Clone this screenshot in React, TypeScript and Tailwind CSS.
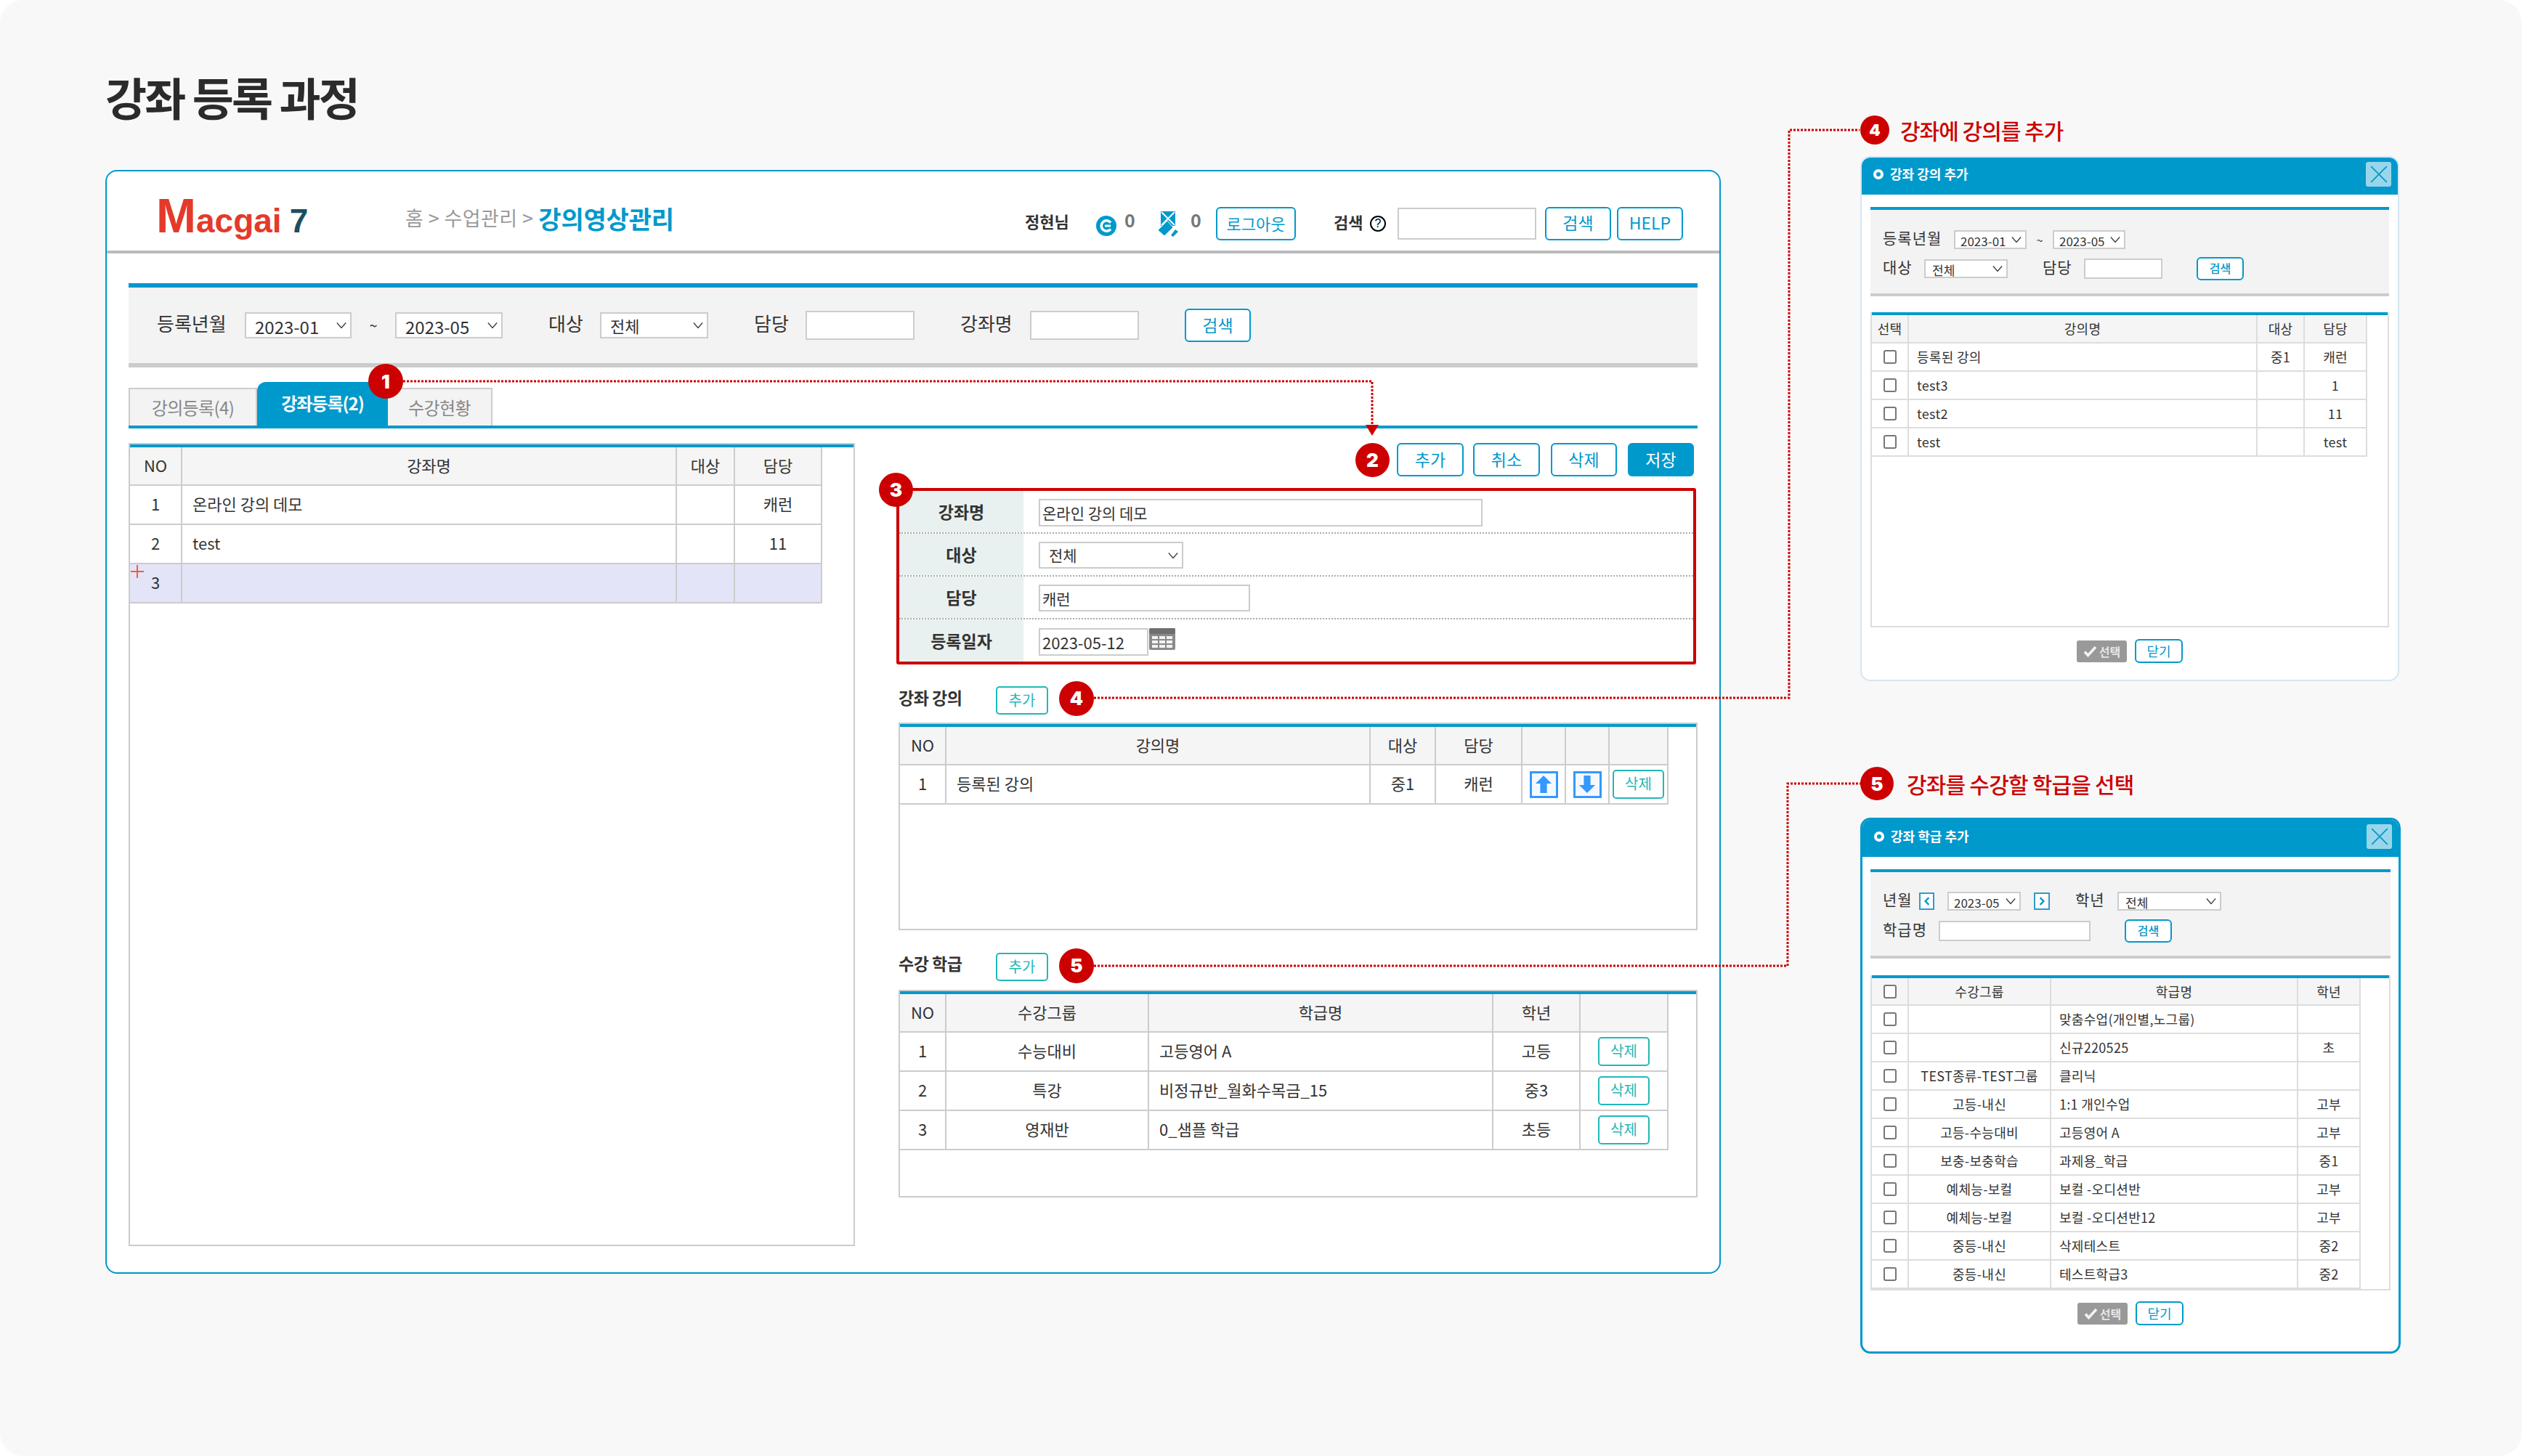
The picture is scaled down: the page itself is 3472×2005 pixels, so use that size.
const inputCls = "border-2 border-[#ccc] bg-white px-[3px] text-[#333] outline-none";
const thCls = "border-r-2 border-b-2 border-[#ccc] bg-[#f5f5f5] pb-[3px] font-normal";
const tdCls = "border-r-2 border-b-2 border-[#ccc] pb-[3px] text-center font-normal";
const tdBtnCls = "border-r-2 border-b-2 border-[#ccc] text-center font-normal";
const tdLeftCls = "border-r-2 border-b-2 border-[#ccc] pb-[3px] pl-[14px] text-left font-normal";
const mThCls = "border-r-2 border-b-2 border-[#ddd] bg-[#f5f5f5] font-normal";
const mTdCls = "border-r-2 border-b-2 border-[#ddd] text-center font-normal";
const mTdLeftCls = "border-r-2 border-b-2 border-[#ddd] pl-[11px] text-left font-normal";

function Select({ value, className, pad = "pl-[12px]" }: any) {
  return (
    <div className={`relative shrink-0 ${className}`}>
      <select
        defaultValue={value}
        className={`h-full w-full appearance-none border-2 border-[#ccc] bg-white text-[#333] outline-none ${pad}`}
      >
        <option>{value}</option>
      </select>
      <svg viewBox="0 0 16 10" className="pointer-events-none absolute top-1/2 right-[7px] h-[9px] w-[14px] -translate-y-1/2" fill="none" stroke="#333" strokeWidth="1.4">
        <path d="M1 1l7 8 7-8" />
      </svg>
    </div>
  );
}

function BlueBtn({ children, className }: any) {
  return (
    <button className={`shrink-0 rounded-[6px] border-2 border-[#0099cc] bg-white pb-[2px] text-[#0099cc] ${className}`}>
      {children}
    </button>
  );
}

function TealBtn({ children, className }: any) {
  return (
    <button className={`shrink-0 rounded-[5px] border-2 border-[#22b8b8] bg-white pb-[2px] text-[20px] leading-none text-[#22b8b8] ${className}`}>
      {children}
    </button>
  );
}

function Badge({ n, className }: any) {
  return (
    <div className={`z-10 flex shrink-0 items-center justify-center rounded-full bg-[#cc0000] font-['Inter',sans-serif] font-black text-white ${className}`}>
      {n}
    </div>
  );
}

function TableBox({ className, children }: any) {
  return (
    <div className={`overflow-hidden border-2 border-[#ccc] bg-white ${className}`}>
      <div className="h-[4px] bg-[#0099cc]" />
      {children}
    </div>
  );
}

function ArrowBtn({ dir }: any) {
  return (
    <div className="mx-auto flex h-[37px] w-[39px] items-center justify-center border-[3px] border-[#3399ff] bg-[#f4f9ff]">
      <svg viewBox="0 0 26 28" className="h-[26px] w-[24px]" fill="#3399ff">
        {dir === "up" ? <path d="M13 1l12 12h-7v14H8V13H1z" /> : <path d="M13 27L1 15h7V1h10v14h7z" />}
      </svg>
    </div>
  );
}

function ModalHead({ title }: any) {
  return (
    <div className="flex h-[51px] shrink-0 items-center bg-[#0099cc] pr-[9px] pb-[6px] pl-[16px]">
      <div className="h-[14px] w-[14px] rounded-full border-[4px] border-white" />
      <div className="ml-[9px] text-[18px] font-bold text-white">{title}</div>
      <div className="ml-auto flex h-[34px] w-[35px] items-center justify-center rounded-[3px] bg-[#99d6ea]">
        <svg viewBox="0 0 24 24" className="h-[26px] w-[26px]" stroke="#0099cc" strokeWidth="1.6" fill="none">
          <path d="M2 2l20 20M22 2L2 22" />
        </svg>
      </div>
    </div>
  );
}

function ModalFoot({ className }: any) {
  return (
    <div className={`flex items-center justify-center gap-[11px] ${className}`}>
      <button className="flex h-[30px] w-[69px] items-center justify-center gap-[3px] rounded-[3px] bg-[#999] text-[16px] font-bold text-[#e6e6e6]">
        <svg viewBox="0 0 18 16" className="h-[16px] w-[19px]" fill="none" stroke="#f2f2f2" strokeWidth="3.6">
          <path d="M1.5 8.5l4.5 5L16.5 2" />
        </svg>
        선택
      </button>
      <BlueBtn className="h-[33px] w-[66px] text-[18px] leading-none">닫기</BlueBtn>
    </div>
  );
}

function Check() {
  return <div className="mx-auto h-[19px] w-[18px] rounded-[3px] border-2 border-[#777] bg-white" />;
}

const lessonRows = [
  ["등록된 강의", "중1", "캐런"],
  ["test3", "", "1"],
  ["test2", "", "11"],
  ["test", "", "test"],
];

const classRows = [
  ["", "맞춤수업(개인별,노그룹)", ""],
  ["", "신규220525", "초"],
  ["TEST종류-TEST그룹", "클리닉", ""],
  ["고등-내신", "1:1 개인수업", "고부"],
  ["고등-수능대비", "고등영어 A", "고부"],
  ["보충-보충학습", "과제용_학급", "중1"],
  ["예체능-보컬", "보컬 -오디션반", "고부"],
  ["예체능-보컬", "보컬 -오디션반12", "고부"],
  ["중등-내신", "삭제테스트", "중2"],
  ["중등-내신", "테스트학급3", "중2"],
  ["", "", ""],
];

const gradeRows = [
  ["1", "수능대비", "고등영어 A", "고등"],
  ["2", "특강", "비정규반_월화수목금_15", "중3"],
  ["3", "영재반", "0_샘플 학급", "초등"],
];

export default function App() {
  return (
    <div className="relative flex h-[2005px] w-[3472px] overflow-hidden rounded-[32px] bg-[#f8f8f8] pl-[145px] font-['Noto_Sans_CJK_KR','Noto_Sans',sans-serif] text-[#333]">
      {/* dotted connectors between the numbered badges */}
      <svg className="pointer-events-none absolute top-0 left-0 z-10 h-[2005px] w-[3472px]" fill="none" stroke="#cc0000" strokeWidth="3" strokeDasharray="3 2">
        <path d="M555 525H1889V586" />
        <path d="M1506 961H2463V179H2560" />
        <path d="M1506 1330H2461V1079H2561" />
        <path d="M1880 585h18l-9 15z" fill="#cc0000" stroke="none" />
      </svg>

      <div className="w-[2224px] shrink-0">
        <h1 className="mt-[98px] mb-[66px] h-[70px] text-[62px] leading-[70px] font-bold tracking-[-2.8px] text-[#2b2b2b]">
          강좌 등록 과정
        </h1>

        <div className="h-[1520px] overflow-hidden rounded-[16px] border-2 border-[#0099cc] bg-white">
          {/* top bar */}
          <div className="flex h-[113px] items-center border-b-4 border-[#bbb] pt-[34px] pr-[50px] pl-[68px]">
            <div className="flex w-[343px] shrink-0 -translate-y-[11px] items-baseline font-['Liberation_Sans',sans-serif] leading-none font-bold">
              <span className="text-[66px] text-[#e43a2a]">M</span>
              <span className="text-[46px] text-[#e43a2a]">acgai</span>
              <span className="ml-[11px] text-[46px] text-[#1c4f63]">7</span>
            </div>
            <div className="-translate-y-[7px] text-[27px] tracking-[0.4px] text-[#999]">홈 &gt; 수업관리 &gt;</div>
            <div className="ml-[7px] -translate-y-[7px] text-[34px] font-bold tracking-[-0.2px] text-[#0099cc]">강의영상관리</div>

            <div className="ml-auto flex items-center">
              <div className="w-[98px] -translate-y-[3px] text-[22px] font-bold">정현님</div>
              <svg viewBox="0 0 28 28" className="h-[28px] w-[28px] shrink-0 translate-y-[3px]">
                <circle cx="14" cy="14" r="14" fill="#0099cc" />
                <path d="M20 9.5a7.2 7.2 0 1 0 0 9" fill="none" stroke="#fff" strokeWidth="3.6" />
                <path d="M12 14h8" stroke="#fff" strokeWidth="3" />
              </svg>
              <div className="ml-[11px] w-[46px] -translate-y-[5px] text-[25px] font-bold text-[#777]">0</div>
              <svg viewBox="0 0 30 36" className="h-[36px] w-[30px] shrink-0 translate-y-[1px]">
                <rect x="4" y="0" width="20" height="20" fill="#0099cc" />
                <path d="M5 1l18 18M23 1L5 19" stroke="#fff" strokeWidth="1.8" />
                <path d="M0 26L13 13l8 9L9 34z" fill="#0099cc" stroke="#fff" strokeWidth="1" />
                <path d="M18 33l6-8 4 3-7 7z" fill="#0099cc" />
              </svg>
              <div className="w-[50px] -translate-y-[5px] pl-[15px] text-[25px] font-bold text-[#777]">0</div>
              <BlueBtn className="h-[46px] w-[110px] text-[22px] leading-none">로그아웃</BlueBtn>
              <div className="ml-[52px] w-[44px] -translate-y-[2px] text-[22px] font-bold">검색</div>
              <div className="ml-[6px] flex h-[22px] w-[22px] items-center justify-center rounded-full border-2 border-black font-['Liberation_Sans',sans-serif] text-[16px] leading-none text-black">
                ?
              </div>
              <input className={`ml-[16px] h-[44px] w-[191px] ${inputCls}`} />
              <BlueBtn className="ml-[12px] h-[46px] w-[91px] text-[23px] leading-none">검색</BlueBtn>
              <BlueBtn className="ml-[8px] h-[46px] w-[91px] text-[23px] leading-none">HELP</BlueBtn>
            </div>
          </div>

          <div className="px-[30px]">
            {/* search */}
            <div className="mt-[41px] flex h-[116px] items-center border-t-[6px] border-b-[6px] border-t-[#0099cc] border-b-[#ccc] bg-[#f3f3f3] pl-[39px] text-[26px]">
              <div className="w-[121px] shrink-0 -translate-y-[4px]">등록년월</div>
              <Select value="2023-01" className="h-[36px] w-[147px] text-[24px]" />
              <div className="w-[60px] shrink-0 text-center text-[20px]">~</div>
              <Select value="2023-05" className="h-[36px] w-[148px] text-[24px]" />
              <div className="ml-[63px] w-[71px] shrink-0 -translate-y-[4px]">대상</div>
              <Select value="전체" className="h-[36px] w-[149px] text-[22px]" />
              <div className="ml-[63px] w-[71px] shrink-0 -translate-y-[4px]">담당</div>
              <input className={`h-[40px] w-[150px] ${inputCls}`} />
              <div className="ml-[63px] w-[96px] shrink-0 -translate-y-[4px]">강좌명</div>
              <input className={`h-[40px] w-[150px] ${inputCls}`} />
              <BlueBtn className="ml-[63px] h-[46px] w-[91px] text-[23px] leading-none">검색</BlueBtn>
            </div>

            {/* tabs */}
            <div className="relative mt-[20px] flex h-[64px] items-end border-b-4 border-[#0099cc] text-[24px]">
              <div className="flex h-[52px] w-[177px] items-center justify-center border-2 border-b-0 border-[#ccc] bg-[#f3f3f3] tracking-[-0.6px] text-[#888]">
                강의등록(4)
              </div>
              <div className="flex h-[60px] w-[180px] items-center justify-center rounded-t-[12px] bg-[#0099cc] pb-[2px] font-bold tracking-[-1px] text-white">
                강좌등록(2)
              </div>
              <div className="flex h-[52px] w-[144px] items-center justify-center border-2 border-b-0 border-l-0 border-[#ccc] bg-[#f3f3f3] tracking-[-0.6px] text-[#888]">
                수강현황
              </div>
              <Badge n="1" className="absolute top-[-25px] left-[330px] h-[48px] w-[48px] text-[26px]" />
            </div>

            <div className="mt-[20px] flex">
              {/* left list */}
              <TableBox className="relative h-[1106px] w-[1000px] shrink-0">
                <table className="w-[952px] table-fixed border-collapse text-[22px]">
                  <colgroup>
                    <col className="w-[71px]" />
                    <col className="w-[681px]" />
                    <col className="w-[80px]" />
                    <col className="w-[120px]" />
                  </colgroup>
                  <thead>
                    <tr className="h-[52px]">
                      <th className={thCls}>NO</th>
                      <th className={thCls}>강좌명</th>
                      <th className={thCls}>대상</th>
                      <th className={thCls}>담당</th>
                    </tr>
                  </thead>
                  <tbody>
                    <tr className="h-[54px]">
                      <td className={tdCls}>1</td>
                      <td className={tdLeftCls}>온라인 강의 데모</td>
                      <td className={tdCls}></td>
                      <td className={tdCls}>캐런</td>
                    </tr>
                    <tr className="h-[54px]">
                      <td className={tdCls}>2</td>
                      <td className={tdLeftCls}>test</td>
                      <td className={tdCls}></td>
                      <td className={tdCls}>11</td>
                    </tr>
                    <tr className="h-[54px] bg-[#e3e4f7]">
                      <td className={tdCls}>3</td>
                      <td className={tdLeftCls}></td>
                      <td className={tdCls}></td>
                      <td className={tdCls}></td>
                    </tr>
                  </tbody>
                </table>
                <svg viewBox="0 0 18 18" className="absolute top-[166px] left-[1px] h-[18px] w-[18px]" stroke="#ff5a36" strokeWidth="2">
                  <path d="M0 9h18M9 0v18" />
                </svg>
              </TableBox>

              {/* right edit panel */}
              <div className="ml-[60px] w-[1100px] shrink-0">
                <div className="flex h-[46px] items-center justify-end pr-[5px] text-[23px]">
                  <Badge n="2" className="mr-[10px] h-[47px] w-[47px] text-[26px]" />
                  <BlueBtn className="h-[46px] w-[92px] leading-none">추가</BlueBtn>
                  <BlueBtn className="ml-[13px] h-[46px] w-[92px] leading-none">취소</BlueBtn>
                  <BlueBtn className="ml-[15px] h-[46px] w-[91px] leading-none">삭제</BlueBtn>
                  <button className="ml-[15px] h-[46px] w-[91px] rounded-[6px] bg-[#0099cc] pb-[2px] leading-none text-white">저장</button>
                </div>

                <div className="relative mt-[16px] -ml-[3px] h-[243px] w-[1101px] rounded-[3px] border-4 border-[#cc0000] text-[23px]">
                  <Badge n="3" className="absolute top-[-25px] left-[-28px] h-[47px] w-[47px] text-[26px]" />
                  <div className="flex h-[59px] border-b-2 border-dotted border-[#aaa]">
                    <div className="flex w-[171px] items-center justify-center bg-[#e9f1f0] font-bold">강좌명</div>
                    <input defaultValue="온라인 강의 데모" className={`mt-[11px] ml-[21px] h-[38px] w-[611px] text-[21px] ${inputCls}`} />
                  </div>
                  <div className="flex h-[59px] border-b-2 border-dotted border-[#aaa]">
                    <div className="flex w-[171px] items-center justify-center bg-[#e9f1f0] font-bold">대상</div>
                    <Select value="전체" className="mt-[11px] ml-[21px] h-[37px] w-[199px] text-[21px]" />
                  </div>
                  <div className="flex h-[59px] border-b-2 border-dotted border-[#aaa]">
                    <div className="flex w-[171px] items-center justify-center bg-[#e9f1f0] font-bold">담당</div>
                    <input defaultValue="캐런" className={`mt-[11px] ml-[21px] h-[37px] w-[291px] text-[21px] ${inputCls}`} />
                  </div>
                  <div className="flex h-[58px]">
                    <div className="flex w-[171px] items-center justify-center bg-[#e9f1f0] font-bold">등록일자</div>
                    <input defaultValue="2023-05-12" className={`mt-[12px] ml-[21px] h-[38px] w-[151px] text-[22px] ${inputCls}`} />
                    <svg viewBox="0 0 36 30" className="mt-[12px] ml-[1px] h-[30px] w-[36px]">
                      <rect width="36" height="30" rx="2" fill="#8a8a8a" />
                      <rect width="36" height="8" rx="2" fill="#6f6f6f" />
                      <path d="M4 11h8v4H4zM14 11h8v4h-8zM24 11h8v4h-8zM4 17h8v4H4zM14 17h8v4h-8zM24 17h8v4h-8zM4 23h8v4H4zM14 23h8v4h-8zM24 23h8v4h-8z" fill="#f2f2f2" />
                    </svg>
                  </div>
                </div>

                {/* lessons in course */}
                <div className="mt-[30px] flex h-[39px] items-center">
                  <div className="w-[134px] shrink-0 -translate-y-[4px] text-[23px] font-bold tracking-[-0.5px]">강좌 강의</div>
                  <TealBtn className="h-[39px] w-[72px]">추가</TealBtn>
                  <Badge n="4" className="ml-[15px] h-[48px] w-[48px] -translate-y-[3px] text-[26px]" />
                </div>
                <TableBox className="mt-[11px] h-[286px] w-[1100px]">
                  <table className="w-[1057px] table-fixed border-collapse text-[22px]">
                    <colgroup>
                      <col className="w-[63px]" />
                      <col className="w-[584px]" />
                      <col className="w-[90px]" />
                      <col className="w-[119px]" />
                      <col className="w-[60px]" />
                      <col className="w-[60px]" />
                      <col className="w-[81px]" />
                    </colgroup>
                    <thead>
                      <tr className="h-[52px]">
                        <th className={thCls}>NO</th>
                        <th className={thCls}>강의명</th>
                        <th className={thCls}>대상</th>
                        <th className={thCls}>담당</th>
                        <th className={thCls}></th>
                        <th className={thCls}></th>
                        <th className={thCls}></th>
                      </tr>
                    </thead>
                    <tbody>
                      <tr className="h-[54px]">
                        <td className={tdCls}>1</td>
                        <td className={tdLeftCls}>등록된 강의</td>
                        <td className={tdCls}>중1</td>
                        <td className={tdCls}>캐런</td>
                        <td className={tdBtnCls}><ArrowBtn dir="up" /></td>
                        <td className={tdBtnCls}><ArrowBtn dir="down" /></td>
                        <td className={tdBtnCls}><TealBtn className="h-[40px] w-[71px]">삭제</TealBtn></td>
                      </tr>
                    </tbody>
                  </table>
                </TableBox>

                {/* classes in course */}
                <div className="mt-[31px] flex h-[39px] items-center">
                  <div className="w-[134px] shrink-0 -translate-y-[5px] text-[23px] font-bold tracking-[-0.5px]">수강 학급</div>
                  <TealBtn className="h-[39px] w-[72px]">추가</TealBtn>
                  <Badge n="5" className="ml-[15px] h-[48px] w-[48px] -translate-y-[2px] text-[26px]" />
                </div>
                <TableBox className="mt-[12px] h-[286px] w-[1100px]">
                  <table className="w-[1057px] table-fixed border-collapse text-[22px]">
                    <colgroup>
                      <col className="w-[63px]" />
                      <col className="w-[279px]" />
                      <col className="w-[474px]" />
                      <col className="w-[120px]" />
                      <col className="w-[121px]" />
                    </colgroup>
                    <thead>
                      <tr className="h-[52px]">
                        <th className={thCls}>NO</th>
                        <th className={thCls}>수강그룹</th>
                        <th className={thCls}>학급명</th>
                        <th className={thCls}>학년</th>
                        <th className={thCls}></th>
                      </tr>
                    </thead>
                    <tbody>
                      {gradeRows.map((r) => (
                        <tr key={r[0]} className="h-[54px]">
                          <td className={tdCls}>{r[0]}</td>
                          <td className={tdCls}>{r[1]}</td>
                          <td className={tdLeftCls}>{r[2]}</td>
                          <td className={tdCls}>{r[3]}</td>
                          <td className={tdBtnCls}><TealBtn className="h-[40px] w-[71px]">삭제</TealBtn></td>
                        </tr>
                      ))}
                    </tbody>
                  </table>
                </TableBox>
              </div>
            </div>
          </div>
        </div>
      </div>

      {/* popups on the right */}
      <div className="ml-[192px] w-[744px] shrink-0 pt-[159px]">
        <div className="flex h-[40px] items-center">
          <Badge n="4" className="h-[40px] w-[40px] text-[22px]" />
          <div className="ml-[15px] text-[30px] font-medium tracking-[-1px] text-[#cc0000]">강좌에 강의를 추가</div>
        </div>

        <div className="mt-[16px] flex h-[723px] w-[742px] flex-col overflow-hidden rounded-[14px] border-2 border-[#d6e6f2] bg-white">
          <ModalHead title="강좌 강의 추가" />
          <div className="px-[12px] pt-[17px]">
            <div className="h-[123px] border-t-4 border-b-4 border-t-[#0099cc] border-b-[#ccc] bg-[#f3f3f3] pt-[26px] pl-[17px] text-[21px]">
              <div className="flex h-[30px] items-center">
                <div className="w-[98px] shrink-0 -translate-y-[2px] tracking-[1px]">등록년월</div>
                <Select value="2023-01" pad="pl-[7px]" className="h-[26px] w-[100px] text-[17px]" />
                <div className="w-[36px] shrink-0 text-center text-[16px]">~</div>
                <Select value="2023-05" pad="pl-[7px]" className="h-[26px] w-[100px] text-[17px]" />
              </div>
              <div className="mt-[10px] flex h-[30px] items-center">
                <div className="w-[57px] shrink-0 -translate-y-[2px] tracking-[1px]">대상</div>
                <Select value="전체" pad="pl-[9px]" className="h-[26px] w-[115px] text-[17px]" />
                <div className="ml-[48px] w-[57px] shrink-0 -translate-y-[2px] tracking-[1px]">담당</div>
                <input className={`h-[28px] w-[108px] ${inputCls}`} />
                <BlueBtn className="ml-[47px] h-[32px] w-[65px] text-[16px] leading-none font-medium">검색</BlueBtn>
              </div>
            </div>

            <div className="mt-[22px] h-[434px] overflow-hidden border-2 border-t-0 border-[#ddd]">
              <div className="h-[4px] bg-[#0099cc]" />
              <table className="w-[681px] table-fixed border-collapse text-[18px] tracking-[0.3px]">
                <colgroup>
                  <col className="w-[50px]" />
                  <col className="w-[480px]" />
                  <col className="w-[65px]" />
                  <col className="w-[86px]" />
                </colgroup>
                <thead>
                  <tr className="h-[38px]">
                    <th className={mThCls}>선택</th>
                    <th className={mThCls}>강의명</th>
                    <th className={mThCls}>대상</th>
                    <th className={mThCls}>담당</th>
                  </tr>
                </thead>
                <tbody>
                  {lessonRows.map((r) => (
                    <tr key={r[0]} className="h-[39px]">
                      <td className={mTdCls}><Check /></td>
                      <td className={mTdLeftCls}>{r[0]}</td>
                      <td className={mTdCls}>{r[1]}</td>
                      <td className={mTdCls}>{r[2]}</td>
                    </tr>
                  ))}
                </tbody>
              </table>
            </div>
            <ModalFoot className="mt-[16px]" />
          </div>
        </div>

        <div className="mt-[118px] flex h-[46px] items-center">
          <Badge n="5" className="h-[46px] w-[46px] text-[26px]" />
          <div className="ml-[18px] text-[30px] font-medium tracking-[-0.8px] text-[#cc0000]">강좌를 수강할 학급을 선택</div>
        </div>

        <div className="mt-[24px] flex h-[738px] w-[744px] flex-col overflow-hidden rounded-[14px] border-[3px] border-[#0099cc] bg-white">
          <ModalHead title="강좌 학급 추가" />
          <div className="px-[11px] pt-[17px]">
            <div className="h-[123px] border-t-4 border-b-4 border-t-[#0099cc] border-b-[#ccc] bg-[#f3f3f3] pt-[25px] pl-[17px] text-[21px]">
              <div className="flex h-[30px] items-center">
                <div className="w-[50px] shrink-0 -translate-y-[2px] tracking-[1px]">년월</div>
                <div className="flex h-[24px] w-[21px] shrink-0 items-center justify-center border-2 border-[#3399cc] bg-white">
                  <svg viewBox="0 0 10 14" className="h-[12px] w-[8px]" fill="none" stroke="#0099cc" strokeWidth="3"><path d="M8 1L2 7l6 6" /></svg>
                </div>
                <Select value="2023-05" pad="pl-[7px]" className="ml-[18px] h-[26px] w-[101px] text-[17px]" />
                <div className="ml-[18px] flex h-[24px] w-[22px] shrink-0 items-center justify-center border-2 border-[#3399cc] bg-white">
                  <svg viewBox="0 0 10 14" className="h-[12px] w-[8px]" fill="none" stroke="#0099cc" strokeWidth="3"><path d="M2 1l6 6-6 6" /></svg>
                </div>
                <div className="ml-[35px] w-[58px] shrink-0 -translate-y-[2px] tracking-[1px]">학년</div>
                <Select value="전체" pad="pl-[9px]" className="h-[26px] w-[143px] text-[17px]" />
              </div>
              <div className="mt-[11px] flex h-[30px] items-center">
                <div className="w-[77px] shrink-0 -translate-y-[2px] tracking-[1px]">학급명</div>
                <input className={`h-[28px] w-[209px] ${inputCls}`} />
                <BlueBtn className="ml-[47px] h-[32px] w-[65px] text-[16px] leading-none font-medium">검색</BlueBtn>
              </div>
            </div>

            <div className="mt-[23px] h-[434px] overflow-hidden border-2 border-t-0 border-[#ddd]">
              <div className="h-[4px] bg-[#0099cc]" />
              <table className="w-[672px] table-fixed border-collapse text-[18px] tracking-[0.3px]">
                <colgroup>
                  <col className="w-[50px]" />
                  <col className="w-[196px]" />
                  <col className="w-[340px]" />
                  <col className="w-[86px]" />
                </colgroup>
                <thead>
                  <tr className="h-[37px]">
                    <th className={mThCls}><Check /></th>
                    <th className={mThCls}>수강그룹</th>
                    <th className={mThCls}>학급명</th>
                    <th className={mThCls}>학년</th>
                  </tr>
                </thead>
                <tbody>
                  {classRows.map((r, i) => (
                    <tr key={i} className="h-[39px]">
                      <td className={mTdCls}>{i < 10 && <Check />}</td>
                      <td className={mTdCls}>{r[0]}</td>
                      <td className={mTdLeftCls}>{r[1]}</td>
                      <td className={mTdCls}>{r[2]}</td>
                    </tr>
                  ))}
                </tbody>
              </table>
            </div>
            <ModalFoot className="mt-[15px]" />
          </div>
        </div>
      </div>
    </div>
  );
}
